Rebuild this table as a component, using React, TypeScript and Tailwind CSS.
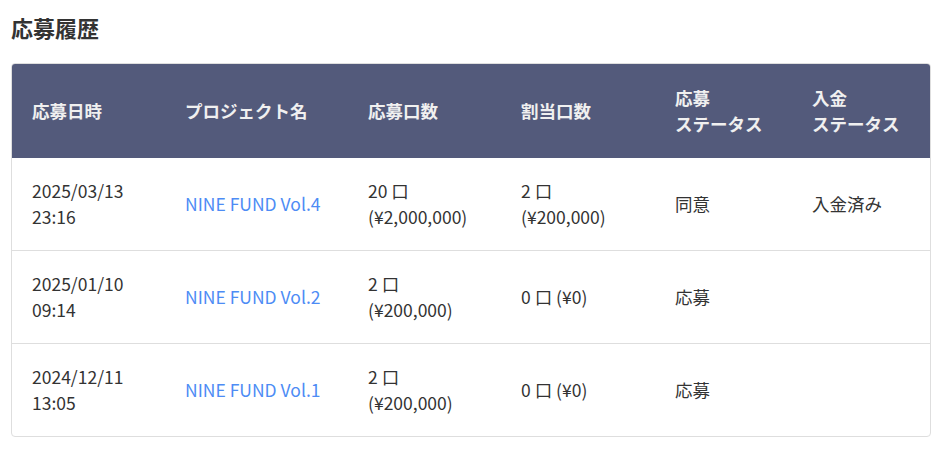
const rows = [
  {
    date: "2025/03/13",
    time: "23:16",
    project: "NINE FUND Vol.4",
    applied: ["20 口", "(¥2,000,000)"],
    allotted: ["2 口", "(¥200,000)"],
    status: "同意",
    payment: "入金済み",
  },
  {
    date: "2025/01/10",
    time: "09:14",
    project: "NINE FUND Vol.2",
    applied: ["2 口", "(¥200,000)"],
    allotted: ["0 口 (¥0)"],
    status: "応募",
    payment: "",
  },
  {
    date: "2024/12/11",
    time: "13:05",
    project: "NINE FUND Vol.1",
    applied: ["2 口", "(¥200,000)"],
    allotted: ["0 口 (¥0)"],
    status: "応募",
    payment: "",
  },
];

export default function App() {
  return (
    <div
      className="min-h-screen bg-white px-[11px] pt-[11px] text-[#333]"
      style={{ fontFamily: '"Noto Sans CJK JP", "Noto Sans", sans-serif' }}
    >
      <h2 className="mb-[19px] text-[22px] font-bold leading-[33px] text-[#333]">応募履歴</h2>

      <div className="w-[920px] overflow-hidden rounded border border-[#dedede]">
        <table className="w-full table-fixed border-collapse text-[17.5px] leading-[26px]">
          <colgroup>
            <col className="w-[153px]" />
            <col className="w-[183px]" />
            <col className="w-[153px]" />
            <col className="w-[154px]" />
            <col className="w-[137px]" />
            <col />
          </colgroup>
          <thead>
            <tr className="bg-[#535a7b] text-left text-[#f0f0f0]">
              <th className="pt-[21px] pb-[21px] pl-5 font-bold">応募日時</th>
              <th className="pt-[21px] pb-[21px] pl-5 font-bold">プロジェクト名</th>
              <th className="pt-[21px] pb-[21px] pl-5 font-bold">応募口数</th>
              <th className="pt-[21px] pb-[21px] pl-5 font-bold">割当口数</th>
              <th className="pt-[21px] pb-[21px] pl-5 font-bold">
                応募
                <br />
                ステータス
              </th>
              <th className="pt-[21px] pb-[21px] pl-5 font-bold">
                入金
                <br />
                ステータス
              </th>
            </tr>
          </thead>
          <tbody>
            {rows.map((r, i) => (
              <tr key={r.project} className={i > 0 ? "border-t border-[#dedede]" : ""}>
                <td className="pt-[20px] pb-[20px] pl-5 align-middle">
                  {r.date}
                  <br />
                  {r.time}
                </td>
                <td className="pt-[20px] pb-[20px] pl-5 align-middle text-[#4d8cf5]">{r.project}</td>
                <td className="pt-[20px] pb-[20px] pl-5 align-middle">
                  {r.applied.map((t) => (
                    <div key={t}>{t}</div>
                  ))}
                </td>
                <td className="pt-[20px] pb-[20px] pl-5 align-middle">
                  {r.allotted.map((t) => (
                    <div key={t}>{t}</div>
                  ))}
                </td>
                <td className="pt-[20px] pb-[20px] pl-5 align-middle">{r.status}</td>
                <td className="pt-[20px] pb-[20px] pl-5 align-middle">{r.payment}</td>
              </tr>
            ))}
          </tbody>
        </table>
      </div>
    </div>
  );
}
